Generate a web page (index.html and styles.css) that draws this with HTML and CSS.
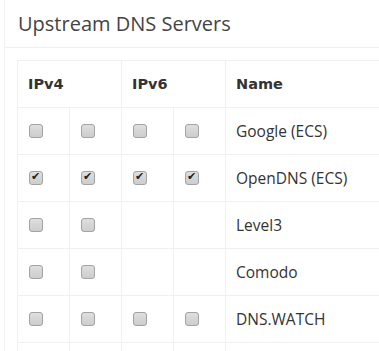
FILE: index.html
```html
<!DOCTYPE html>
<html lang="en">
<head>
    <meta charset="UTF-8">
    <meta name="viewport" content="width=device-width, initial-scale=1.0">
    <title>Upstream DNS Servers</title>
    <link rel="stylesheet" href="styles.css">
</head>
<body>
    <div class="box">
        <div class="box-header">
            <h3 class="box-title">Upstream DNS Servers</h3>
        </div>
        <div class="box-body">
            <table class="dns-table">
                <colgroup>
                    <col class="check-col">
                    <col class="check-col">
                    <col class="check-col">
                    <col class="check-col">
                    <col>
                </colgroup>
                <thead>
                    <tr>
                        <th colspan="2">IPv4</th>
                        <th colspan="2">IPv6</th>
                        <th>Name</th>
                    </tr>
                </thead>
                <tbody>
                    <tr>
                        <td><input type="checkbox"></td>
                        <td><input type="checkbox"></td>
                        <td><input type="checkbox"></td>
                        <td><input type="checkbox"></td>
                        <td>Google (ECS)</td>
                    </tr>
                    <tr>
                        <td><input type="checkbox" checked></td>
                        <td><input type="checkbox" checked></td>
                        <td><input type="checkbox" checked></td>
                        <td><input type="checkbox" checked></td>
                        <td>OpenDNS (ECS)</td>
                    </tr>
                    <tr>
                        <td><input type="checkbox"></td>
                        <td><input type="checkbox"></td>
                        <td></td>
                        <td></td>
                        <td>Level3</td>
                    </tr>
                    <tr>
                        <td><input type="checkbox"></td>
                        <td><input type="checkbox"></td>
                        <td></td>
                        <td></td>
                        <td>Comodo</td>
                    </tr>
                    <tr>
                        <td><input type="checkbox"></td>
                        <td><input type="checkbox"></td>
                        <td><input type="checkbox"></td>
                        <td><input type="checkbox"></td>
                        <td>DNS.WATCH</td>
                    </tr>
                    <tr>
                        <td></td>
                        <td></td>
                        <td></td>
                        <td></td>
                        <td></td>
                    </tr>
                </tbody>
            </table>
        </div>
    </div>
</body>
</html>
```

FILE: styles.css
```css
body {
    margin: 0;
    padding: 0;
    background: #fff;
    font-family: "Open Sans", sans-serif;
    color: #333;
    overflow: hidden;
}

.box {
    width: 440px;
    margin-left: 4px;
    border-left: 1px solid #f0f0f0;
    background: #fff;
}

.box-header {
    height: 47px;
    padding: 0 13px;
    border-bottom: 1px solid #f0f0f0;
    display: flex;
    align-items: center;
}

.box-title {
    margin: 0;
    font-size: 20px;
    font-weight: normal;
    color: #444;
}

.box-body {
    padding: 12px 12px;
}

.dns-table {
    border-collapse: collapse;
    width: 420px;
    table-layout: fixed;
}

.dns-table .check-col {
    width: 52px;
}

.dns-table th,
.dns-table td {
    border: 1px solid #f0f0f0;
    height: 46px;
    padding: 0 10px;
    text-align: left;
    vertical-align: middle;
}

.dns-table th {
    font-family: "DejaVu Sans", sans-serif;
    font-size: 14.5px;
    font-weight: bold;
    color: #333;
}

.dns-table td {
    font-size: 15.5px;
}

.dns-table input[type="checkbox"] {
    appearance: none;
    -webkit-appearance: none;
    display: block;
    position: relative;
    width: 14px;
    height: 14px;
    margin: 0 0 0 1px;
    border: 1px solid #a3a3a3;
    border-radius: 3px;
    background: linear-gradient(#dedede, #cdcdcd);
}

.dns-table input[type="checkbox"]:checked::after {
    content: "\2714";
    position: absolute;
    left: 1px;
    top: -2px;
    font-family: "DejaVu Sans", sans-serif;
    font-size: 11px;
    color: #222;
}
```
